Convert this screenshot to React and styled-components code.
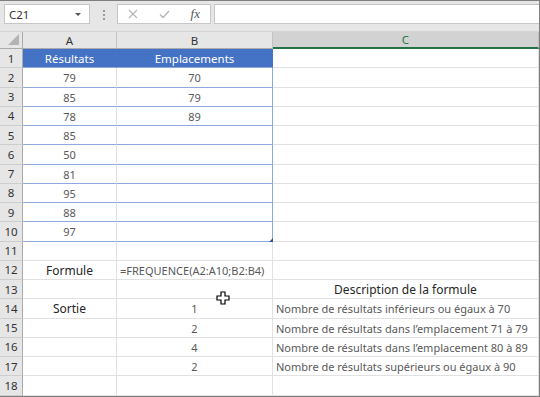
import React from 'react';
import styled, { createGlobalStyle } from 'styled-components';

const GlobalStyle = createGlobalStyle`
  html, body {
    margin: 0;
    padding: 0;
    background: #ffffff;
  }
  body {
    font-family: "Noto Sans", "Open Sans", sans-serif;
  }
`;

const Frame = styled.div`
  width: 540px;
  height: 397px;
  box-sizing: border-box;
  border: 1px solid #7f7f7f;
  border-left: none;
  background: #ffffff;
  overflow: hidden;
  position: relative;
  display: flex;
  flex-direction: column;
`;

const Toolbar = styled.div`
  height: 31px;
  box-sizing: border-box;
  background: #e6e6e6;
  border-bottom: 1px solid #d4d4d4;
  display: flex;
  align-items: flex-start;
  padding: 3px 0 0 4px;
`;

const Box = styled.div`
  height: 20px;
  box-sizing: border-box;
  background: #ffffff;
  border: 1px solid #c6c6c6;
  display: flex;
  align-items: center;
`;

const NameBox = styled(Box)`
  width: 86px;
  padding: 0 8px 0 4px;
  justify-content: space-between;
  font-size: 11.5px;
  color: #333333;
`;

const Caret = styled.span`
  width: 0;
  height: 0;
  border-left: 3px solid transparent;
  border-right: 3px solid transparent;
  border-top: 3px solid #555555;
`;

const Dots = styled.div`
  width: 27px;
  display: flex;
  flex-direction: column;
  align-items: center;
  gap: 2px;
  padding-top: 6px;
  span {
    width: 2px;
    height: 2px;
    background: #9a9a9a;
  }
`;

const FxBox = styled(Box)`
  width: 94px;
  padding: 0 10px 0 10px;
  justify-content: space-between;
`;

const FxLabel = styled.span`
  font-family: "Liberation Serif", "DejaVu Serif", serif;
  font-style: italic;
  font-size: 13px;
  color: #555555;
  padding-bottom: 1px;
`;

const FormulaInput = styled(Box)`
  flex: 1;
  margin-left: 3px;
  border-right: none;
`;

const Sheet = styled.div`
  display: grid;
  grid-template-columns: 23px 94px 156px 1fr;
  grid-template-rows: 17px repeat(18, 19.25px);
  font-size: 11px;
  position: relative;
`;

const Corner = styled.div`
  background: #e6e6e6;
  border-right: 1px solid #ababab;
  border-bottom: 1px solid #ababab;
  position: relative;
  &::after {
    content: '';
    position: absolute;
    right: 3px;
    bottom: 3px;
    width: 0;
    height: 0;
    border-left: 11px solid transparent;
    border-bottom: 11px solid #b4b4b4;
  }
`;

const ColHead = styled.div`
  background: ${(p) => (p.$selected ? '#d2d2d2' : '#e6e6e6')};
  color: ${(p) => (p.$selected ? '#217346' : '#333333')};
  border-right: 1px solid #c3c3c3;
  border-bottom: ${(p) => (p.$selected ? '2px solid #217346' : '1px solid #ababab')};
  box-sizing: border-box;
  display: flex;
  align-items: center;
  justify-content: center;
  font-size: 11.5px;
`;

const RowHead = styled.div`
  background: #e6e6e6;
  color: #333333;
  border-right: 1px solid #ababab;
  border-bottom: 1px solid #cdcdcd;
  box-sizing: border-box;
  display: flex;
  align-items: center;
  justify-content: center;
  font-size: 11.5px;
`;

const Cell = styled.div`
  box-sizing: border-box;
  position: relative;
  display: flex;
  align-items: center;
  justify-content: ${(p) => (p.$align === 'left' ? 'flex-start' : 'center')};
  padding: 1px ${(p) => (p.$align === 'left' ? '3px' : '0')} 0;
  white-space: nowrap;
  overflow: visible;
  font-size: ${(p) => (p.$dark ? '12px' : p.$head ? '11.5px' : '11px')};
  color: ${(p) => (p.$dark ? '#262626' : '#595959')};
  background: ${(p) => (p.$head ? '#4472c4' : 'transparent')};
  border-right: 1px solid ${(p) => (p.$head ? '#4472c4' : p.$edge ? '#8ea9db' : '#e1e1e1')};
  border-bottom: 1px solid ${(p) => (p.$head || p.$band ? '#8ea9db' : '#e1e1e1')};
  ${(p) => p.$head && 'color: #ffffff;'}
`;

const Handle = styled.span`
  position: absolute;
  right: -1px;
  bottom: -1px;
  width: 0;
  height: 0;
  border-left: 4px solid transparent;
  border-bottom: 4px solid #2f5597;
`;

const Cursor = styled.svg`
  position: absolute;
  left: 216px;
  top: 259px;
`;

const scores = ['79', '85', '78', '85', '50', '81', '95', '88', '97'];
const bins = ['70', '79', '89'];
const outputs = [
  ['1', 'Nombre de résultats inférieurs ou égaux à 70'],
  ['2', 'Nombre de résultats dans l’emplacement 71 à 79'],
  ['4', 'Nombre de résultats dans l’emplacement 80 à 89'],
  ['2', 'Nombre de résultats supérieurs ou égaux à 90'],
];

function buildRows() {
  const rows = [];
  rows.push([
    { text: 'Résultats', head: true },
    { text: 'Emplacements', head: true },
    { text: '' },
  ]);
  scores.forEach((s, i) => {
    rows.push([
      { text: s, band: true },
      { text: bins[i] || '', band: true, edge: true, handle: i === scores.length - 1 },
      { text: '' },
    ]);
  });
  rows.push([{ text: '' }, { text: '' }, { text: '' }]);
  rows.push([
    { text: 'Formule', dark: true },
    { text: '=FREQUENCE(A2:A10;B2:B4)', align: 'left' },
    { text: '' },
  ]);
  rows.push([{ text: '' }, { text: '' }, { text: 'Description de la formule', dark: true }]);
  outputs.forEach(([n, d], i) => {
    rows.push([
      { text: i === 0 ? 'Sortie' : '', dark: true },
      { text: n },
      { text: d, align: 'left' },
    ]);
  });
  rows.push([{ text: '' }, { text: '' }, { text: '' }]);
  return rows;
}

export default function App() {
  const rows = buildRows();
  return (
    <>
      <GlobalStyle />
      <Frame>
        <Toolbar>
          <NameBox>
            C21
            <Caret />
          </NameBox>
          <Dots>
            <span />
            <span />
            <span />
          </Dots>
          <FxBox>
            <svg width="10" height="10" viewBox="0 0 10 10">
              <path d="M1 1 L9 9 M9 1 L1 9" stroke="#b5b5b5" strokeWidth="1.1" fill="none" />
            </svg>
            <svg width="11" height="9" viewBox="0 0 11 9">
              <path d="M1 4.5 L4 7.5 L10 1" stroke="#b5b5b5" strokeWidth="1.3" fill="none" />
            </svg>
            <FxLabel>fx</FxLabel>
          </FxBox>
          <FormulaInput />
        </Toolbar>
        <Sheet>
          <Corner />
          <ColHead>A</ColHead>
          <ColHead>B</ColHead>
          <ColHead $selected>C</ColHead>
          {rows.map((cells, r) => (
            <React.Fragment key={r}>
              <RowHead>{r + 1}</RowHead>
              {cells.map((c, k) => (
                <Cell
                  key={k}
                  $head={c.head}
                  $band={c.band}
                  $edge={c.edge}
                  $dark={c.dark}
                  $align={c.align}
                >
                  {c.text}
                  {c.handle && <Handle />}
                </Cell>
              ))}
            </React.Fragment>
          ))}
          <Cursor width="14" height="14" viewBox="0 0 14 14">
            <path
              d="M5 1 H9 V5 H13 V9 H9 V13 H5 V9 H1 V5 H5 Z"
              fill="#ffffff"
              stroke="#000000"
              strokeWidth="1.2"
            />
          </Cursor>
        </Sheet>
      </Frame>
    </>
  );
}
